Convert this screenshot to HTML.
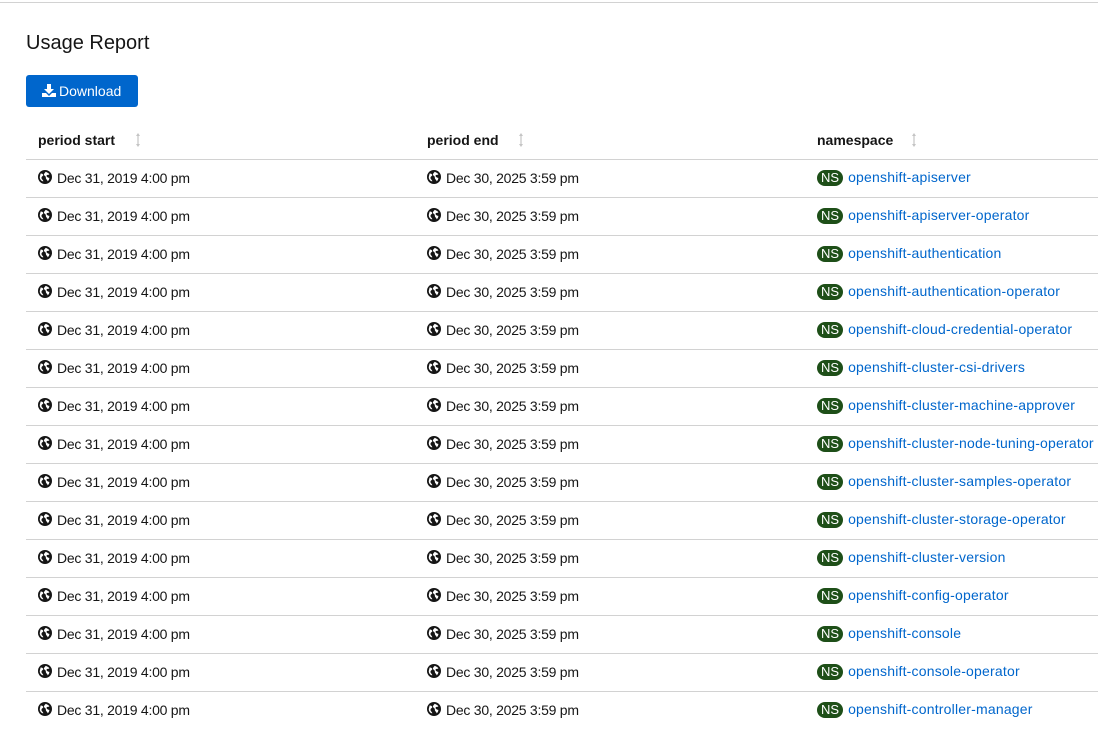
<!DOCTYPE html>
<html><head><style>
body{margin:0;width:1098px;height:707px;overflow:hidden;background:#fff;font-family:"Liberation Sans",sans-serif;color:#151515;position:relative}
.top{position:absolute;left:0;right:0;top:2px;border-top:1px solid #d2d2d2}
h1{position:absolute;left:26px;top:32px;margin:0;font-size:20px;font-weight:400}
.btn{position:absolute;left:26px;top:75px;width:112px;height:32px;background:#0066cc;border-radius:3px;color:#fff;font-size:14px;line-height:32px;box-sizing:border-box;padding-left:16px}
.th{position:absolute;top:132px;font-size:14px;font-weight:700}
.sort{position:absolute;top:133px;width:4px;height:14px}
.row{position:absolute;left:26px;width:1072px;height:38px;border-top:1px solid #d2d2d2;font-size:14px}
.c{position:absolute;top:10px;white-space:nowrap;letter-spacing:-0.25px}
.g{display:inline-block;vertical-align:-1px;margin-right:5px}
.ns{display:inline-block;background:#1e4f18;color:#fff;border-radius:9px;font-size:13px;padding:0 4px;line-height:16px;margin-right:5px;letter-spacing:0}
a{color:#0066cc;text-decoration:none;letter-spacing:0.2px}
</style></head><body>
<div class="top"></div>
<h1>Usage Report</h1>
<div class="btn"><svg width="14" height="13" viewBox="0 0 14 13" style="vertical-align:-1px;margin-right:3px"><path d="M5 0h4v5h3l-5 5-5-5h3z" fill="#fff"/><path d="M0 9h4l3 3 3-3h4v4H0z" fill="#fff"/></svg>Download</div>
<div class="th" style="left:38px">period start</div>
<div class="th" style="left:427px">period end</div>
<div class="th" style="left:817px">namespace</div>
<svg class="sort" style="left:136px" viewBox="0 0 4 14"><path d="M2 0L0 3h4zM2 14L0 11h4zM1.4 3h1.2v8H1.4z" fill="#c4c4c4"/></svg>
<svg class="sort" style="left:519px" viewBox="0 0 4 14"><path d="M2 0L0 3h4zM2 14L0 11h4zM1.4 3h1.2v8H1.4z" fill="#c4c4c4"/></svg>
<svg class="sort" style="left:912px" viewBox="0 0 4 14"><path d="M2 0L0 3h4zM2 14L0 11h4zM1.4 3h1.2v8H1.4z" fill="#c4c4c4"/></svg>
<div id="rows"></div>
<script>
var ns=["openshift-apiserver","openshift-apiserver-operator","openshift-authentication","openshift-authentication-operator","openshift-cloud-credential-operator","openshift-cluster-csi-drivers","openshift-cluster-machine-approver","openshift-cluster-node-tuning-operator","openshift-cluster-samples-operator","openshift-cluster-storage-operator","openshift-cluster-version","openshift-config-operator","openshift-console","openshift-console-operator","openshift-controller-manager"];
var globe='<svg class="g" width="14" height="14" viewBox="0 0 16 16"><circle cx="8" cy="8" r="8" fill="#151515"/><path d="M3 4c2 0 3 1 3 2s-2 1-2 3 2 2 2 4c-2 0-4-2-4-5zM9 2c1 1 3 1 4 3-1 1-2 0-3 1s1 3 3 3c0 2-1 3-2 4 0-2-2-2-2-4s-1-2-2-3 1-3 2-4z" fill="#fff"/></svg>';
var h='';
ns.forEach(function(n,i){h+='<div class="row" style="top:'+(159+i*38)+'px"><div class="c" style="left:12px">'+globe+'Dec 31, 2019 4:00 pm</div><div class="c" style="left:401px">'+globe+'Dec 30, 2025 3:59 pm</div><div class="c" style="left:791px;top:9px"><span class="ns">NS</span><a>'+n+'</a></div></div>';});
document.getElementById('rows').innerHTML=h;
</script>
</body></html>
